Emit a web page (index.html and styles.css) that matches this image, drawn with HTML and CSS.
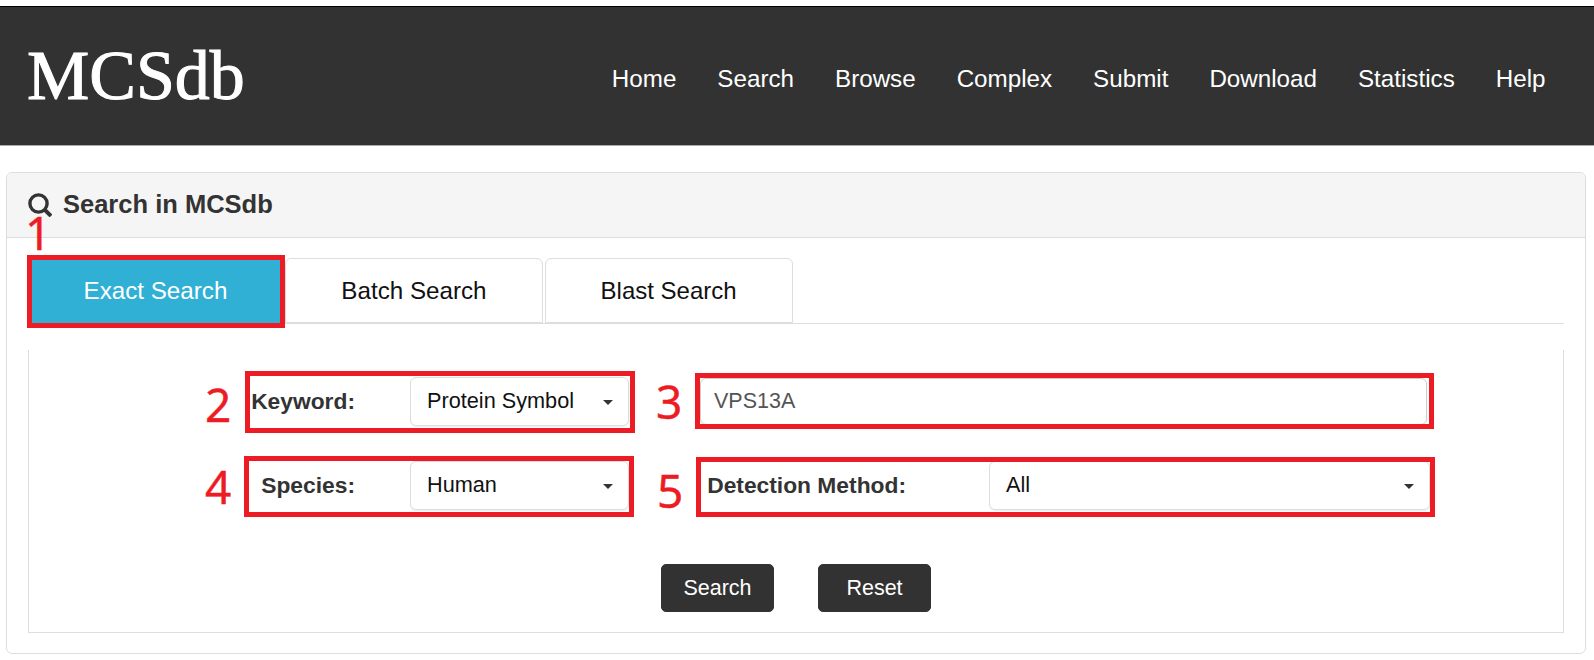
FILE: index.html
```html
<!DOCTYPE html>
<html lang="en">
<head>
  <meta charset="UTF-8" />
  <title>MCSdb - Search</title>
  <link rel="stylesheet" href="styles.css">
</head>
<body>

  <header class="topbar">
    <a class="logo">MCSdb</a>
    <nav class="nav">
      <a>Home</a>
      <a>Search</a>
      <a>Browse</a>
      <a>Complex</a>
      <a>Submit</a>
      <a>Download</a>
      <a>Statistics</a>
      <a>Help</a>
    </nav>
  </header>

  <section class="panel">
    <div class="panel-head">
      <svg class="icon-search" viewBox="0 0 24 24" width="24" height="24">
        <circle cx="10.5" cy="10.5" r="8.6" fill="none" stroke="#333" stroke-width="3.4" />
        <path d="M16.8 16.8 L23 23" fill="none" stroke="#333" stroke-width="4" />
      </svg>
      <h3>Search in MCSdb</h3>
    </div>
    <div class="panel-body">
      <ul class="tabs">
        <li class="tab active">Exact Search</li>
        <li class="tab">Batch Search</li>
        <li class="tab tab-last">Blast Search</li>
      </ul>
      <form class="search-box">
        <div class="fields">
          <div class="field field-left">
            <label>Keyword:</label>
            <button type="button" class="select">Protein Symbol<span class="caret"></span></button>
          </div>
          <div class="field field-right">
            <input type="text" class="text-input" value="VPS13A">
          </div>
          <div class="field field-left">
            <label>Species:</label>
            <button type="button" class="select">Human<span class="caret"></span></button>
          </div>
          <div class="field field-right">
            <label class="label-wide">Detection Method:</label>
            <button type="button" class="select">All<span class="caret"></span></button>
          </div>
        </div>
        <div class="actions">
          <button type="button" class="btn">Search</button>
          <button type="button" class="btn">Reset</button>
        </div>
      </form>
    </div>
  </section>

  <!-- red markers drawn over the screenshot -->
  <div class="mark box-1"></div>
  <div class="mark box-2"></div>
  <div class="mark box-3"></div>
  <div class="mark box-4"></div>
  <div class="mark box-5"></div>
  <span class="num num-1">1</span>
  <span class="num num-2">2</span>
  <span class="num num-3">3</span>
  <span class="num num-4">4</span>
  <span class="num num-5">5</span>

</body>
</html>
```

FILE: styles.css
```css
* {
  box-sizing: border-box;
}

html, body {
  height: 660px;
  overflow: hidden;
}

body {
  position: relative;
  margin: 0;
  padding-top: 6px;
  font-family: "Liberation Sans", Arial, sans-serif;
  background: #fff;
  color: #333;
}

.topbar {
  display: flex;
  align-items: center;
  justify-content: space-between;
  height: 140px;
  padding: 0 28px 0 27px;
  background: #323232;
  border-top: 1px solid #000;
  border-bottom: 1px solid #aaa;
}

.logo {
  font-family: "Liberation Serif", "Times New Roman", serif;
  font-size: 70px;
  line-height: 1;
  color: #fff;
  -webkit-text-stroke: 1px #fff;
}

.nav {
  display: flex;
  padding-top: 6px;
}

.nav a {
  padding: 0 20.5px;
  font-size: 24.2px;
  color: #fff;
}

.panel {
  margin: 26px 8px 0 6px;
  height: 482px;
  border: 1px solid #ddd;
  border-radius: 6px;
}

.panel-head {
  display: flex;
  align-items: center;
  gap: 11px;
  height: 65px;
  padding-left: 21px;
  background: #f5f5f5;
  border-bottom: 1px solid #ddd;
  border-radius: 6px 6px 0 0;
}

.panel-head h3 {
  margin: 0 0 2px;
  font-size: 25.5px;
  font-weight: bold;
  color: #333;
}

.panel-body {
  padding: 20px 21px 0 21px;
}

.tabs {
  display: flex;
  align-items: flex-end;
  height: 66px;
  margin: 0;
  padding: 0;
  list-style: none;
  border-bottom: 1px solid #ddd;
}

.tab {
  height: 65px;
  margin-right: 2px;
  padding: 0 55px;
  font-size: 24.2px;
  line-height: 63px;
  color: #111;
  background: #fff;
  border: 1px solid #ddd;
  border-radius: 6px 6px 0 0;
}

.tab.active {
  padding: 0 55px 0 54.5px;
  color: #fff;
  background: #31b0d5;
  border-color: #31b0d5;
}

.tab-last {
  font-size: 24px;
}

.search-box {
  height: 283px;
  margin-top: 26px;
  padding-top: 27px;
  border: 1px solid #ddd;
  border-top: none;
}

.fields {
  display: grid;
  grid-template-columns: 381px 730px;
  column-gap: 71px;
  row-gap: 35px;
  margin-left: 219px;
}

.field {
  display: flex;
  align-items: center;
  height: 49px;
}

.field label {
  width: 107px;
  margin-right: 55px;
  font-size: 22.8px;
  font-weight: bold;
  text-align: right;
  color: #333;
}

.field .label-wide {
  width: 206px;
  margin-right: 83px;
}

.select {
  position: relative;
  flex: 1;
  height: 49px;
  padding: 0 16px 2px;
  font-family: inherit;
  font-size: 21.7px;
  text-align: left;
  color: #111;
  background: #fff;
  border: 1px solid #ddd;
  border-radius: 6px;
  box-shadow: 0 1px 1px rgba(0, 0, 0, 0.06);
}

.caret {
  position: absolute;
  top: 22px;
  right: 15px;
  border-top: 5px solid #333;
  border-left: 5px solid transparent;
  border-right: 5px solid transparent;
}

.text-input {
  width: 727px;
  height: 47px;
  padding: 0 13px;
  font-family: inherit;
  font-size: 21.5px;
  color: #555;
  background: #fff;
  border: 1px solid #ccc;
  border-radius: 6px;
  outline: none;
}

.actions {
  display: flex;
  justify-content: center;
  gap: 44px;
  margin-top: 54px;
}

.btn {
  width: 113px;
  height: 48px;
  font-family: inherit;
  font-size: 21.5px;
  color: #fff;
  background: #323232;
  border: 1px solid #323232;
  border-radius: 5px;
}

.mark {
  position: absolute;
  border: 5px solid #ed1c24;
}

.box-1 { left: 27px; top: 255px; width: 258px; height: 73px; }
.box-2 { left: 245px; top: 371px; width: 390px; height: 62px; }
.box-3 { left: 695px; top: 373px; width: 739px; height: 56px; }
.box-4 { left: 244px; top: 456px; width: 390px; height: 61px; }
.box-5 { left: 696px; top: 457px; width: 739px; height: 60px; }

.num {
  position: absolute;
  font-family: "Noto Sans", sans-serif;
  font-size: 46px;
  line-height: 46px;
  color: #ed1c24;
  -webkit-text-stroke: 0.4px #ed1c24;
}

.num-1 { left: 25px; top: 209px; }
.num-2 { left: 205px; top: 381px; }
.num-3 { left: 656px; top: 378px; }
.num-4 { left: 205px; top: 463px; }
.num-5 { left: 657px; top: 467px; }
```
